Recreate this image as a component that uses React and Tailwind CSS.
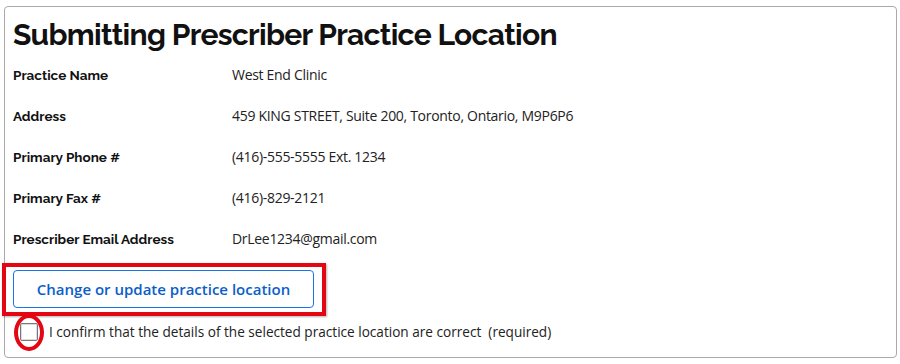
export default function App() {
  const rows = [
    ["Practice Name", "West End Clinic"],
    ["Address", "459 KING STREET, Suite 200, Toronto, Ontario, M9P6P6"],
    ["Primary Phone #", "(416)-555-5555 Ext. 1234"],
    ["Primary Fax #", "(416)-829-2121"],
    ["Prescriber Email Address", "DrLee1234@gmail.com"],
  ];
  const head = { fontFamily: "Raleway, Lato, 'Liberation Sans', sans-serif" };
  const body = { fontFamily: "'Open Sans', 'Liberation Sans', sans-serif" };
  return (
    <div className="w-[900px] h-[364px] bg-white pt-[6px] pl-[4px] pr-[3px]">
      <div className="relative w-[893px] h-[352px] border border-[#a9a9a9] rounded-[4px] pl-[8px] pt-[8px]">
        <h1 className="text-[30px] font-bold text-[#111] leading-[40px] tracking-[-0.7px]" style={head}>
          Submitting Prescriber Practice Location
        </h1>
        <div className="flex flex-col gap-[23px] mt-[11px]">
          {rows.map(([k, v]) => (
            <div key={k} className="flex h-[18px] items-start">
              <div className="w-[219px] text-[13.5px] font-bold text-[#111] leading-[18px]" style={head}>{k}</div>
              <div className="text-[14px] text-[#222] leading-[18px] tracking-[-0.3px]" style={body}>{v}</div>
            </div>
          ))}
        </div>
        <div className="relative mt-[22px] w-[301px]">
          <button className="w-[301px] h-[38px] border border-[#1a73e8] rounded-[4px] text-[15px] font-semibold text-[#0b5ec9] bg-white" style={body}>
            Change or update practice location
          </button>
          <div className="absolute left-[-11px] top-[-7px] w-[324px] h-[53px] border-[4px] border-[#e30613] shadow-[1px_1px_2px_rgba(0,0,0,0.3)]"></div>
        </div>
        <div className="flex items-center mt-[15px] ml-[7px] relative">
          <div className="w-[18px] h-[18px] border border-[#777] rounded-[2px] bg-white shadow-[inset_0_0_0_1px_#ddd]"></div>
          <span className="ml-[11px] text-[13.6px] text-[#222] leading-[18px]" style={body}>
            I confirm that the details of the selected practice location are correct&nbsp; (required)
          </span>
          <div className="absolute left-[-6px] top-[-9px] w-[30px] h-[37px] rounded-[50%] border-[4px] border-[#e30613]"></div>
        </div>
      </div>
    </div>
  );
}
